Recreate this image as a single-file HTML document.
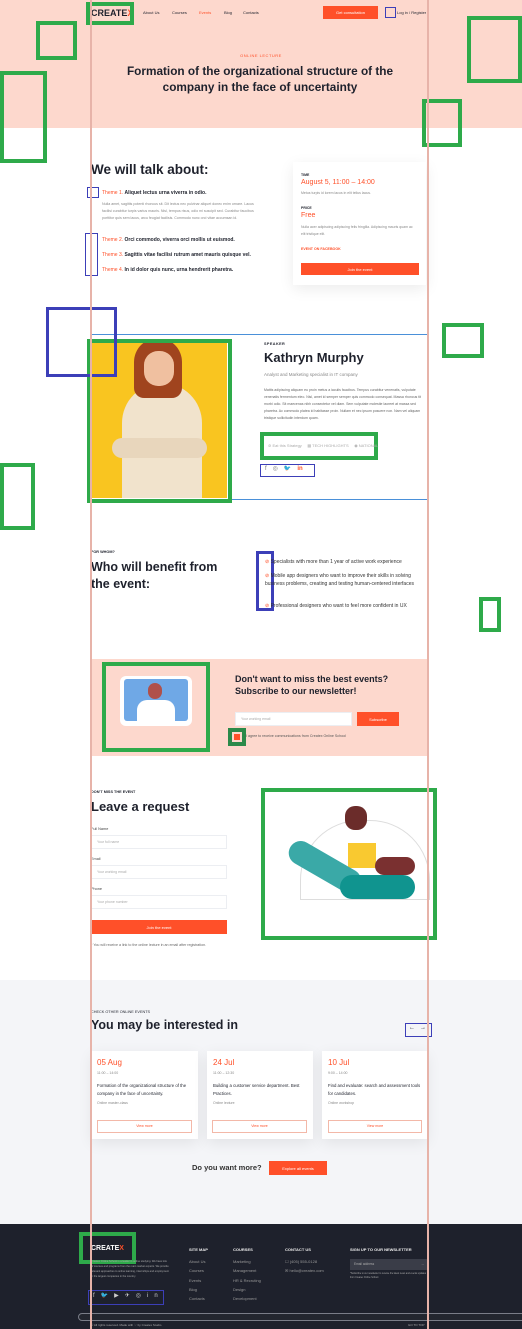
<!DOCTYPE html>
<html><head><meta charset="utf-8"><style>
*{margin:0;padding:0;box-sizing:border-box}
body{width:522px;height:1329px;position:relative;overflow:hidden;background:#fff;font-family:"Liberation Sans",sans-serif;color:#1e212c}
.a{position:absolute}
.t{position:absolute;white-space:nowrap}
.g{position:absolute;border:4px solid #2eaa4a}
.b{position:absolute;border:1.5px solid #3c3fb8}
.btn{position:absolute;background:#ff5029;color:#fff;font-size:4px;display:flex;align-items:center;justify-content:center}
.inp{position:absolute;background:#fff;border:1px solid #eceef2;font-size:3.5px;color:#aaa;padding-left:5px;display:flex;align-items:center}
.card{position:absolute;background:#fff;box-shadow:0 4px 14px rgba(0,0,0,.08)}
.sm{font-size:3.5px;color:#888}
</style></head><body>
<!-- hero -->
<div class="a" style="left:0;top:0;width:522px;height:128px;background:#fdd8cd"></div>
<div class="t" style="left:91px;top:8px;font-size:9px;font-weight:bold;color:#1e212c">CREATE<span style="color:#ff5029">X</span></div>
<div class="g" style="left:86px;top:2px;width:48px;height:23px"></div>
<div class="t" style="left:143px;top:10px;font-size:4px">About Us</div>
<div class="t" style="left:172px;top:10px;font-size:4px">Courses</div>
<div class="t" style="left:199px;top:10px;font-size:4px;color:#ff5029">Events</div>
<div class="t" style="left:224px;top:10px;font-size:4px">Blog</div>
<div class="t" style="left:243px;top:10px;font-size:4px">Contacts</div>
<div class="btn" style="left:323px;top:6px;width:55px;height:13px">Get consultation</div>
<div class="b" style="left:385px;top:7px;width:11px;height:11px"></div>
<div class="t" style="left:397px;top:10px;font-size:4px">Log in / Register</div>
<div class="g" style="left:36px;top:21px;width:41px;height:39px"></div>
<div class="g" style="left:0;top:71px;width:47px;height:92px"></div>
<div class="g" style="left:467px;top:16px;width:55px;height:67px"></div>
<div class="g" style="left:422px;top:99px;width:40px;height:48px"></div>
<div class="t" style="left:0;width:522px;text-align:center;top:53px;font-size:4px;color:#ff5029;letter-spacing:.5px">ONLINE LECTURE</div>
<div class="a" style="left:100px;width:320px;text-align:center;top:63px;font-size:11.8px;font-weight:bold;line-height:16px">Formation of the organizational structure of the company in the face of uncertainty</div>

<!-- talk about -->
<div class="t" style="left:91px;top:162px;font-size:13.5px;font-weight:bold">We will talk about:</div>
<div class="b" style="left:87px;top:187px;width:12px;height:11px"></div>
<div class="t" style="left:102px;top:190px;font-size:5px"><span style="color:#ff5029">Theme 1.</span> <b>Aliquet lectus urna viverra in odio.</b></div>
<div class="a sm" style="left:102px;top:201px;width:155px;line-height:7px;font-size:3.6px">Nulla amet, sagittis potenti rhoncus sit. Dit lectus nec pulvinar aliquet donec enim ornare. Lacus facilisi curabitur turpis varius mauris. Nisl, tempus risus, odio mi suscipit sed. Curabitur faucibus porttitor quis sem lacus, arcu feugiat facilisis. Commodo nunc orci vitae accumsan id.</div>
<div class="b" style="left:85px;top:233px;width:13px;height:43px"></div>
<div class="t" style="left:102px;top:237px;font-size:5px"><span style="color:#ff5029">Theme 2.</span> <b>Orci commodo, viverra orci mollis ut euismod.</b></div>
<div class="t" style="left:102px;top:252px;font-size:5px"><span style="color:#ff5029">Theme 3.</span> <b>Sagittis vitae facilisi rutrum amet mauris quisque vel.</b></div>
<div class="t" style="left:102px;top:267px;font-size:5px"><span style="color:#ff5029">Theme 4.</span> <b>In id dolor quis nunc, urna hendrerit pharetra.</b></div>
<div class="card" style="left:293px;top:162px;width:133px;height:123px"></div>
<div class="t" style="left:301px;top:173px;font-size:3.5px;font-weight:bold">TIME</div>
<div class="t" style="left:301px;top:179px;font-size:7px;color:#ff5029">August 5, 11:00 – 14:00</div>
<div class="t sm" style="left:301px;top:191px">Metus turpis id lorem lacus in elit tellus lacus.</div>
<div class="t" style="left:301px;top:206px;font-size:3.5px;font-weight:bold">PRICE</div>
<div class="t" style="left:301px;top:212px;font-size:7px;color:#ff5029">Free</div>
<div class="a sm" style="left:301px;top:224px;width:115px;line-height:7px">Nulla acer adipiscing adipiscing felis fringilla. Adipiscing mauris quam ac elit tristique elit.</div>
<div class="t" style="left:301px;top:247px;font-size:3.6px;color:#ff5029;font-weight:bold">EVENT ON FACEBOOK</div>
<div class="btn" style="left:301px;top:263px;width:118px;height:12px">Join the event</div>

<!-- speaker -->
<div class="a" style="left:90px;top:334px;width:339px;height:166px;border:1.5px solid #4a90d9"></div>
<div class="a" style="left:92px;top:343px;width:135px;height:155px;background:#f9c520;overflow:hidden">
<div class="a" style="left:30px;top:40px;width:80px;height:130px;background:#f1e3cc;border-radius:40px 40px 0 0"></div>
<div class="a" style="left:42px;top:-5px;width:48px;height:60px;background:#a0441e;border-radius:24px 24px 10px 10px"></div>
<div class="a" style="left:52px;top:8px;width:30px;height:35px;background:#f0c0a0;border-radius:14px"></div>
<div class="a" style="left:20px;top:95px;width:95px;height:20px;background:#e8d6bc;border-radius:10px"></div>
</div>
<div class="g" style="left:87px;top:339px;width:145px;height:164px"></div>
<div class="b" style="left:46px;top:307px;width:71px;height:70px;border-width:3px"></div>
<div class="g" style="left:442px;top:323px;width:42px;height:35px"></div>
<div class="g" style="left:0;top:463px;width:35px;height:67px"></div>
<div class="t" style="left:264px;top:342px;font-size:3.8px;font-weight:bold;letter-spacing:.4px">SPEAKER</div>
<div class="t" style="left:264px;top:350px;font-size:13px;font-weight:bold">Kathryn Murphy</div>
<div class="t" style="left:264px;top:372px;font-size:4.5px;color:#888">Analyst and Marketing specialist in IT company</div>
<div class="a sm" style="left:264px;top:387px;width:165px;line-height:7px;color:#666">Mattis adipiscing aliquam eu proin metus a iaculis faucibus. Tempus curabitur venenatis, vulputate venenatis fermentum eleo. Nisl, amet id semper semper quis commodo consequat. Massa rhoncus tit morbi odio. Sit maecenas nibh consectetur vel diam. Sem vulputate molestie laoreet at massa sed pharetra. Ac commodo platea id habitasse proin. Nullam et nec ipsum posuere non. Nam vel aliquam tristique sollicitudin interdum quam.</div>
<div class="g" style="left:260px;top:432px;width:118px;height:28px"></div>
<div class="t" style="left:268px;top:443px;font-size:4px;color:#aaa">⊘ Eat this Strategy &nbsp;&nbsp;&nbsp; ▦ TECH HIGHLIGHTS &nbsp;&nbsp;&nbsp; ◉ NATIONAL</div>
<div class="b" style="left:260px;top:464px;width:55px;height:13px;border-width:1px"></div>
<div class="t" style="left:265px;top:465px;font-size:6px;color:#777;letter-spacing:6px">f◎🐦<span style="color:#ff5029;font-weight:bold;letter-spacing:0">in</span></div>

<!-- for whom -->
<div class="t" style="left:91px;top:550px;font-size:3.8px;font-weight:bold">FOR WHOM?</div>
<div class="a" style="left:91px;top:559px;width:135px;font-size:12.5px;font-weight:bold;line-height:16.5px">Who will benefit from the event:</div>
<div class="b" style="left:256px;top:551px;width:18px;height:60px;border-width:3px"></div>
<div class="t" style="left:265px;top:559px;font-size:5px;color:#333"><span style="color:#ff5029">⊘</span> Specialists with more than 1 year of active work experience</div>
<div class="a" style="left:265px;top:572px;width:165px;font-size:5px;line-height:8.3px;color:#333"><span style="color:#ff5029">⊘</span> Mobile app designers who want to improve their skills in solving business problems, creating and testing human-centered interfaces</div>
<div class="t" style="left:265px;top:603px;font-size:5px;color:#333"><span style="color:#ff5029">⊘</span> Professional designers who want to feel more confident in UX</div>
<div class="g" style="left:479px;top:597px;width:22px;height:35px"></div>

<!-- newsletter -->
<div class="a" style="left:91px;top:659px;width:337px;height:97px;background:#fdd8cd"></div>
<div class="a" style="left:120px;top:676px;width:72px;height:50px;background:#fff;border-radius:6px"></div>
<div class="a" style="left:124px;top:679px;width:64px;height:42px;background:#6fa8e6;border-radius:3px"></div>
<div class="a" style="left:137px;top:700px;width:38px;height:22px;background:#fff;border-radius:10px 10px 0 0"></div>
<div class="a" style="left:148px;top:683px;width:14px;height:16px;background:#b0504a;border-radius:7px"></div>
<div class="g" style="left:102px;top:662px;width:108px;height:90px"></div>
<div class="a" style="left:235px;top:674px;font-size:9px;font-weight:bold;line-height:11.5px">Don't want to miss the best events?<br>Subscribe to our newsletter!</div>
<div class="inp" style="left:235px;top:712px;width:117px;height:14px">Your working email</div>
<div class="btn" style="left:357px;top:712px;width:42px;height:14px">Subscribe</div>
<div class="a" style="left:234px;top:734px;width:6px;height:6px;background:#ff5029"></div>
<div class="g" style="left:228px;top:728px;width:18px;height:18px;border-color:#2b8a4a"></div>
<div class="t" style="left:246px;top:734px;font-size:3.6px;color:#555">I agree to receive communications from Createx Online School</div>

<!-- leave request -->
<div class="t" style="left:91px;top:790px;font-size:3.8px;font-weight:bold">DON'T MISS THE EVENT</div>
<div class="t" style="left:91px;top:799px;font-size:13px;font-weight:bold">Leave a request</div>
<div class="t" style="left:91px;top:827px;font-size:3.8px;color:#444">Full Name</div>
<div class="inp" style="left:91px;top:835px;width:136px;height:14px">Your full name</div>
<div class="t" style="left:91px;top:857px;font-size:3.8px;color:#444">Email</div>
<div class="inp" style="left:91px;top:865px;width:136px;height:14px">Your working email</div>
<div class="t" style="left:91px;top:887px;font-size:3.8px;color:#444">Phone</div>
<div class="inp" style="left:91px;top:895px;width:136px;height:14px">Your phone number</div>
<div class="btn" style="left:91px;top:920px;width:136px;height:14px">Join the event</div>
<div class="t" style="left:91px;top:943px;font-size:3.6px;color:#666">* You will receive a link to the online lecture in an email after registration.</div>
<div class="a" style="left:300px;top:820px;width:130px;height:80px;border:1px solid #ddd;border-radius:60px 60px 0 0"></div>
<div class="a" style="left:345px;top:806px;width:22px;height:24px;background:#6b2c2a;border-radius:10px"></div>
<div class="a" style="left:348px;top:843px;width:28px;height:25px;background:#f9c930"></div>
<div class="a" style="left:285px;top:855px;width:80px;height:24px;background:#3aa9a7;border-radius:12px;transform:rotate(30deg)"></div>
<div class="a" style="left:340px;top:875px;width:75px;height:24px;background:#10948f;border-radius:12px"></div>
<div class="a" style="left:375px;top:857px;width:40px;height:18px;background:#7a3030;border-radius:9px"></div>
<div class="g" style="left:261px;top:788px;width:176px;height:152px"></div>

<!-- interested -->
<div class="a" style="left:0;top:980px;width:522px;height:244px;background:#f4f5f8"></div>
<div class="t" style="left:91px;top:1010px;font-size:3.8px">CHECK OTHER ONLINE EVENTS</div>
<div class="t" style="left:91px;top:1018px;font-size:12.5px;font-weight:bold">You may be interested in</div>
<div class="b" style="left:405px;top:1023px;width:27px;height:14px;border-width:1px"></div>
<div class="t" style="left:409px;top:1025px;font-size:6px">←&nbsp;&nbsp;&nbsp;→</div>

<div class="card" style="left:92px;top:1051px;width:106px;height:88px"></div>
<div class="t" style="left:97px;top:1058px;font-size:8px;color:#ff5029">05 Aug</div>
<div class="t sm" style="left:97px;top:1071px">11:00 – 14:00</div>
<div class="a" style="left:97px;top:1082px;width:98px;font-size:4.3px;line-height:7.5px">Formation of the organizational structure of the company in the face of uncertainty.</div>
<div class="t sm" style="left:97px;top:1101px">Online master-class</div>
<div class="a" style="left:97px;top:1120px;width:95px;height:13px;border:1px solid #f3b8a8;font-size:3.5px;color:#ff5029;text-align:center;line-height:11px">View more</div>

<div class="card" style="left:207px;top:1051px;width:106px;height:88px"></div>
<div class="t" style="left:213px;top:1058px;font-size:8px;color:#ff5029">24 Jul</div>
<div class="t sm" style="left:213px;top:1071px">11:00 – 12:30</div>
<div class="a" style="left:213px;top:1082px;width:98px;font-size:4.3px;line-height:7.5px">Building a customer service department. Best Practices.</div>
<div class="t sm" style="left:213px;top:1101px">Online lecture</div>
<div class="a" style="left:212px;top:1120px;width:95px;height:13px;border:1px solid #f3b8a8;font-size:3.5px;color:#ff5029;text-align:center;line-height:11px">View more</div>

<div class="card" style="left:322px;top:1051px;width:105px;height:88px"></div>
<div class="t" style="left:328px;top:1058px;font-size:8px;color:#ff5029">10 Jul</div>
<div class="t sm" style="left:328px;top:1071px">9:00 – 14:00</div>
<div class="a" style="left:328px;top:1082px;width:98px;font-size:4.3px;line-height:7.5px">Find and evaluate: search and assessment tools for candidates.</div>
<div class="t sm" style="left:328px;top:1101px">Online workshop</div>
<div class="a" style="left:328px;top:1120px;width:94px;height:13px;border:1px solid #f3b8a8;font-size:3.5px;color:#ff5029;text-align:center;line-height:11px">View more</div>

<div class="t" style="left:192px;top:1163px;font-size:7.5px;font-weight:bold;color:#333">Do you want more?</div>
<div class="btn" style="left:269px;top:1161px;width:58px;height:14px">Explore all events</div>

<!-- footer -->
<div class="a" style="left:0;top:1224px;width:522px;height:105px;background:#1e212c"></div>
<div class="t" style="left:91px;top:1245px;font-size:7px;font-weight:bold;color:#fff">CREATE<span style="color:#ff5029">X</span></div>
<div class="g" style="left:79px;top:1232px;width:57px;height:32px"></div>
<div class="a" style="left:91px;top:1259px;width:78px;font-size:2.6px;line-height:5px;color:#aaa">Createx Online School is a leader in online studying. We have lots of courses and programs from the main market experts. We provide relevant approaches to online learning, internships and employment in the largest companies in the country.</div>
<div class="b" style="left:88px;top:1290px;width:76px;height:15px;border-width:1px"></div>
<div class="t" style="left:93px;top:1292px;font-size:6px;color:#ccc;letter-spacing:6px">f🐦▶✈◎in</div>
<div class="t" style="left:189px;top:1247px;font-size:4px;font-weight:bold;color:#eee">SITE MAP</div>
<div class="a" style="left:189px;top:1257px;font-size:4px;line-height:9.3px;color:#999">About Us<br>Courses<br>Events<br>Blog<br>Contacts</div>
<div class="t" style="left:233px;top:1247px;font-size:4px;font-weight:bold;color:#eee">COURSES</div>
<div class="a" style="left:233px;top:1257px;font-size:4px;line-height:9.3px;color:#999">Marketing<br>Management<br>HR &amp; Recruting<br>Design<br>Development</div>
<div class="t" style="left:285px;top:1247px;font-size:4px;font-weight:bold;color:#eee">CONTACT US</div>
<div class="a" style="left:285px;top:1257px;font-size:4px;line-height:9.3px;color:#999">☐ (405) 555-0128<br>✉ hello@createx.com</div>
<div class="t" style="left:350px;top:1247px;font-size:4px;font-weight:bold;color:#eee">SIGN UP TO OUR NEWSLETTER</div>
<div class="a" style="left:350px;top:1259px;width:78px;height:11px;background:#3a3d48;font-size:3.2px;color:#aaa;padding:3px 4px">Email address<span style="float:right">→</span></div>
<div class="a" style="left:350px;top:1273px;width:80px;font-size:2.3px;line-height:3.5px;color:#aaa">*Subscribe to our newsletter to receive the latest news and events updates from Createx Online School.</div>
<div class="a" style="left:78px;top:1313px;width:460px;height:8px;border:1px solid #7a7d88;border-radius:4px;background:#23262f"></div>
<div class="t" style="left:91px;top:1323px;font-size:3px;color:#aaa">© All rights reserved. Made with ♡ by Createx Studio</div>
<div class="t" style="left:408px;top:1323px;font-size:3px;color:#aaa">GO TO TOP</div>

<!-- guide lines -->
<div class="a" style="left:90px;top:0;width:1.5px;height:1329px;background:#e7b3a9"></div>
<div class="a" style="left:427px;top:0;width:1.5px;height:1329px;background:#e7b3a9"></div>
</body></html>
